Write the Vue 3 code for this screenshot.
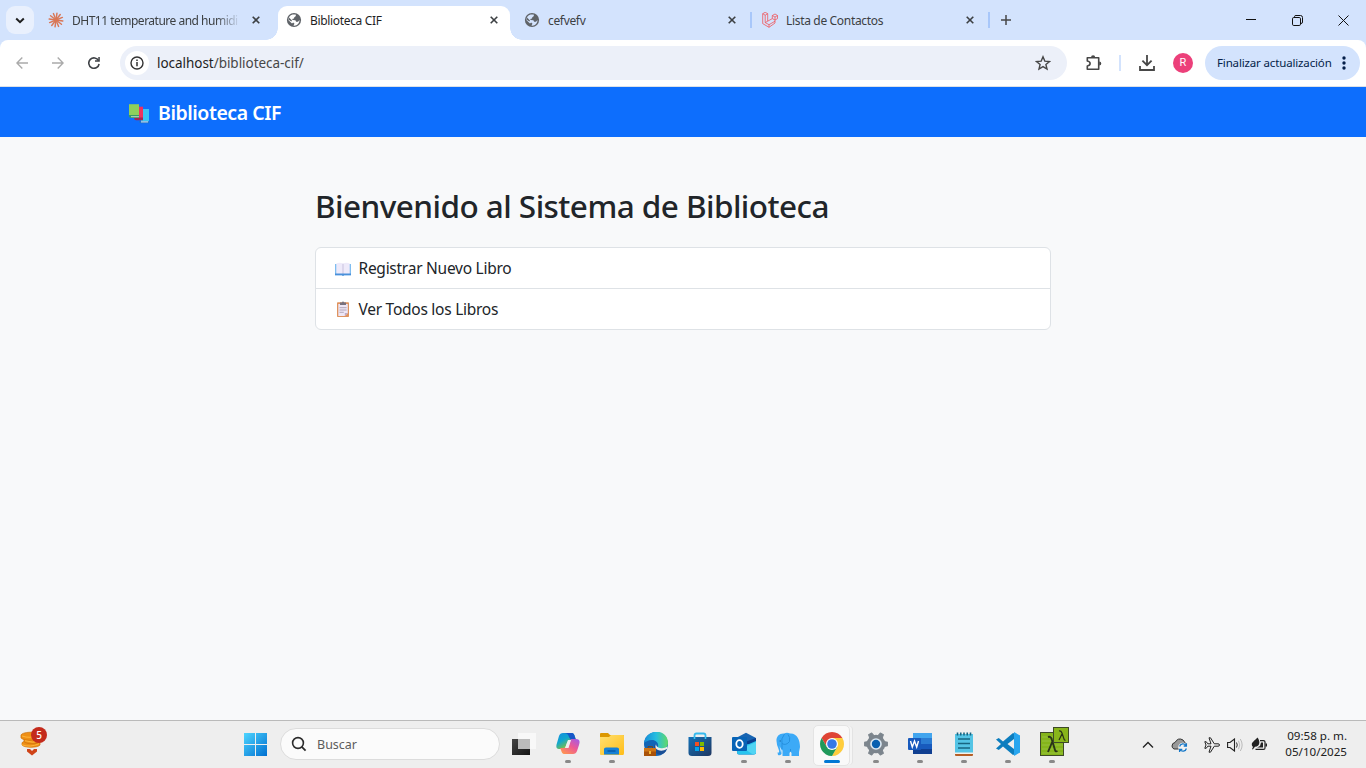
<script setup>
const tabs = [
  { title: 'DHT11 temperature and humidi', icon: 'spark', cls: 'first' },
  { title: 'Biblioteca CIF', icon: 'globe', cls: 'active' },
  { title: 'cefvefv', icon: 'globe', cls: 'sep' },
  { title: 'Lista de Contactos', icon: 'laravel', cls: 'sep' }
]
const rays = [0, 30, 60, 90, 120, 150, 180, 210, 240, 270, 300, 330]
const teeth = [30, 90, 150, 210, 270, 330]
</script>

<template>
  <div class="screen">
    <header class="tabstrip">
      <button class="tabsearch"><svg width="10" height="7" viewBox="0 0 10 7"><path d="M1.2 1.5 5 5.2 8.8 1.5" fill="none" stroke="#1f1f1f" stroke-width="2"/></svg></button>
      <div v-for="t in tabs" :key="t.title" class="tab" :class="t.cls">
        <svg v-if="t.icon === 'spark'" class="fav" viewBox="0 0 16 16"><g stroke="#d97757" stroke-width="1.45" stroke-linecap="round"><line v-for="r in rays" :key="r" x1="8" y1="8" x2="8" y2="1.1" :transform="`rotate(${r + 8} 8 8)`"/></g></svg>
        <svg v-else-if="t.icon === 'globe'" class="fav" viewBox="0 0 16 16"><circle cx="8" cy="8" r="7.1" fill="#5f6368"/><path d="M9.7 2.5 9.9 4.1 8.3 5.3 8 6.6 6.2 7 6.6 8.1 9.4 8.2 10.1 9.8 12 9.7 13.5 8.1C13.6 11.6 11 13.6 8.6 13.7L7.4 13.5 8.5 11.7 7.2 10.4 6 11.4 2.3 8C2.3 5.5 4 3.2 6.6 2.5Z" :fill="t.cls === 'active' ? '#fff' : '#d3e3fd'"/><path d="M2.4 7.4 5.4 9.6 6 8.5 3 5.6Z" fill="#5f6368"/></svg>
        <svg v-else class="fav" viewBox="0 0 16 16"><path d="M.7 1.7 3.2.3 5.7 1.7V9.2L10.3 6.6V3.5L13 2 15.5 3.5V6.6L13 8V11L7 15.3.7 11.6ZM.7 1.7 3.2 3.2 5.7 1.7M3.2 3.2V10.6L5.7 9.2M3.2 10.6 7 12.7 13 9.2M7 12.7V15.3M10.3 3.5 13 5 15.5 3.5M13 5V8L10.3 6.6" fill="none" stroke="#f0555a" stroke-width=".8"/></svg>
        <span class="title">{{ t.title }}</span>
        <svg class="close" viewBox="0 0 8 8"><path d="m.7.7 6.6 6.6M7.3.7.7 7.3" stroke="#3c4043" stroke-width="1.6"/></svg>
      </div>
      <svg class="plus" viewBox="0 0 10 10"><path d="M5 0V10M0 5H10" stroke="#474747" stroke-width="1.5"/></svg>
      <div class="wincontrols">
        <svg width="11" height="11" viewBox="0 0 11 11"><path d="M0 4.5H10" stroke="#111" stroke-width="1"/></svg>
        <svg width="11" height="11" viewBox="0 0 11 11"><path d="M2.5 2.5V1.5Q2.5.5 4 .5H8.5Q10.5.5 10.5 2.5V7Q10.5 8.5 9 8.5H8.5" fill="none" stroke="#111"/><rect x=".5" y="2.5" width="8" height="8" rx="1.3" fill="none" stroke="#111"/></svg>
        <svg width="11" height="11" viewBox="0 0 11 11"><path d="m.5.5 10 10M10.5.5l-10 10" stroke="#111" stroke-width="1"/></svg>
      </div>
    </header>

    <div class="toolbarwrap">
    <div class="toolbar">
      <svg class="nav" viewBox="0 0 12 12"><path d="M12 6H1M6.3.6.9 6l5.4 5.4" fill="none" stroke="#aaa" stroke-width="1.4"/></svg>
      <svg class="nav" viewBox="0 0 12 12"><path d="M0 6h11M5.7.6 11.1 6l-5.4 5.4" fill="none" stroke="#aaa" stroke-width="1.4"/></svg>
      <svg class="nav" viewBox="0 0 12 12"><path d="M10.6 3.7A5.2 5.2 0 1 0 11.1 7" fill="none" stroke="#3f4246" stroke-width="1.6"/><path d="M11.8 0V4.8H7V3.3H10.3V0Z" fill="#3f4246"/></svg>
      <div class="omnibox">
        <span class="info"><svg width="14" height="14" viewBox="0 0 14 14"><circle cx="7" cy="7" r="6" fill="none" stroke="#333" stroke-width="1.4"/><path d="M7 6.1V10.3M7 3.6V5" stroke="#333" stroke-width="1.5"/></svg></span>
        <span class="url">localhost<i>/biblioteca-cif/</i></span>
        <svg class="star" width="16" height="16" viewBox="0 0 16 16"><path d="m8 1.8 1.8 4.3 4.7.4-3.6 3 1.1 4.6L8 11.6l-4 2.5 1.1-4.6-3.6-3 4.7-.4Z" fill="none" stroke="#474747" stroke-width="1.4"/></svg>
      </div>
      <svg class="ext" width="18" height="18" viewBox="0 0 18 18"><path d="M2.3 3.7H13.7V15.3H2.3V12Q5.1 11.5 5.1 9.5T2.3 7Z" fill="none" stroke="#474747" stroke-width="1.6" stroke-linejoin="round"/><path d="M6 3.4A2.1 2.1 0 0 1 10.2 3.4ZM14.2 7.4A2.1 2.1 0 0 1 14.2 11.6Z" fill="#474747"/></svg>
      <span class="divider"></span>
      <svg class="download" width="18" height="18" viewBox="0 0 18 18"><path d="M9 1V11M4.4 6.6 9 11.2 13.6 6.6M2 12V16H16V12" fill="none" stroke="#474747" stroke-width="1.8"/></svg>
      <span class="avatar">R</span>
      <button class="update"><span>Finalizar actualización</span><svg width="4" height="14" viewBox="0 0 4 14"><g fill="#041e49"><circle cx="2" cy="2" r="1.7"/><circle cx="2" cy="7" r="1.7"/><circle cx="2" cy="12" r="1.7"/></g></svg></button>
    </div>
    </div>

    <nav class="navbar">
      <svg width="22" height="22" viewBox="0 0 22 22"><path d="M13 6H21V19H13Z" fill="#38c3f3"/><path d="M11 18.2h10v2H13Q11 20.2 11 18.2" fill="#2372c3"/><path d="M13 18.4h7v1h-7z" fill="#d7e6f3"/><path d="M8 3.7h7V16H8Z" fill="#ed315f"/><path d="M6 14.6h9v2.6H8Q6 17.2 6 14.6" fill="#a42652"/><path d="M1 1.2h10V13H1Z" fill="#8fd05b"/><path d="M.8 12H11v3H3Q.8 15 .8 12" fill="#339b68"/><path d="M3 13.2h8v1H3z" fill="#cad3c7"/></svg>
      <span>Biblioteca CIF</span>
    </nav>

    <main class="page">
      <h1><span>Bienvenido al Sistema de Biblioteca</span></h1>
      <ul>
        <li><svg width="18" height="18" viewBox="0 0 18 18"><path d="M1 5H17V16.3H10L9 17 8 16.3H1Z" fill="#7fbdf0"/><path d="M2.3 4.4Q6 2.8 9 4.8 12 2.8 15.7 4.4V15H2.3Z" fill="#eeeafa"/><path d="M8.3 4.8H9.7V15H8.3Z" fill="#d3cde5"/><path d="M1 14.5H17V16.3H10L9 17 8 16.3H1Z" fill="#4a90da"/></svg><span>Registrar Nuevo Libro</span></li>
        <li><svg width="18" height="18" viewBox="0 0 18 18"><rect x="3" y="2.2" width="12" height="14.8" rx=".8" fill="#df935f"/><path d="M4.3 4H13.8V13L10.8 16H4.3Z" fill="#eee6f5"/><path d="m10.8 16 3-3h-3z" fill="#bdaac8"/><path d="M6 3V2.4H8A1 1 0 0 1 10 2.4H12V5H6Z" fill="#77717f"/><path d="M5.5 7.7H12.6M5.5 10H12.6M5.5 12.3H9.8" stroke="#aaa0b5" stroke-width=".9"/></svg><span>Ver Todos los Libros</span></li>
      </ul>
    </main>

    <footer class="taskbar">
      <div class="widget">
        <svg width="24" height="32" viewBox="0 0 24 32"><g fill="#ee8f16" stroke="#cd7007" stroke-width=".7"><path d="M2 14c0-3 17-4 18-1v3c-2 3-16 3-18 0Z"/><path d="M4 9.5c1-3 15-3 16 0v3c-2 3-14 3-16 0Z"/><path d="M1 6c1-3 15-4 17-1v3.5C15 12 4 12 1 9Z"/></g><path d="M2 7q8 3 16-1M5 11.7q8 3 15 0M2 15.8q8 3 17-1" stroke="#ffb53a" fill="none"/><path d="M7 20h3l2 2 2-2h3v2.5L12 26.5 7 22.5Z" fill="#cf4318"/></svg>
        <b>5</b>
      </div>
      <svg class="start" width="23" height="23" viewBox="0 0 23 23"><defs><linearGradient id="win" x2="1" y2="1"><stop stop-color="#4ed5ff"/><stop offset="1" stop-color="#006fd0"/></linearGradient></defs><path d="M0 0H11V11H0ZM12 0H23V11H12ZM0 12H11V23H0ZM12 12H23V23H12Z" fill="url(#win)"/></svg>
      <div class="search"><svg width="16" height="16" viewBox="0 0 16 16"><circle cx="7" cy="7" r="5.4" fill="none" stroke="#2b2b2b" stroke-width="1.6"/><path d="m10.8 10.9 3.8 3.8" stroke="#2b2b2b" stroke-width="1.8"/></svg><span>Buscar</span></div>

      <div class="apps">
        <div><svg viewBox="0 0 24 24"><defs><linearGradient id="tv" x2="1" y2="1"><stop stop-color="#444"/><stop offset="1" stop-color="#151515"/></linearGradient></defs><path d="M0 7H18V23H0Z" fill="url(#tv)"/><path d="M6 1H24V17H6Z" fill="#f8f8f8"/><path d="M6 7H18V17H6Z" fill="#bababa"/></svg></div>
        <div class="open"><svg viewBox="0 0 24 24"><defs><linearGradient id="ca" x2=".7" y2="1"><stop stop-color="#168cdf"/><stop offset=".45" stop-color="#10a7cf"/><stop offset=".75" stop-color="#64ba64"/><stop offset="1" stop-color="#f5cf20"/></linearGradient><linearGradient id="cb" x1="1" x2=".2" y2="1"><stop stop-color="#9d5bed"/><stop offset=".5" stop-color="#ed5994"/><stop offset="1" stop-color="#ff9652"/></linearGradient></defs><path d="M7 1H16Q18 1 19 5L20 8H15Q12 8 11 11L9 17H3Q-1 17 1 11L3 4Q4 1 7 1Z" fill="url(#ca)"/><path d="M8 1H16Q18 1 19 5L20 8H16Q14 8 13 5 12 1 8 1" fill="#1757c8"/><path d="M15 7H20Q25 7 23 13L21 19Q20 22 17 22H8Q6 22 5 18L4 16H9Q12 16 13 13Z" fill="url(#cb)"/><path d="M12 8H15L12.5 16H9Z" fill="#eee"/></svg></div>
        <div class="open"><svg viewBox="0 0 24 24"><defs><linearGradient id="fo" x2="1" y2="1"><stop stop-color="#ffe071"/><stop offset="1" stop-color="#ffbd18"/></linearGradient></defs><path d="M0 2Q0 1 1 1H8L10 3H23Q24 3 24 4V12H0Z" fill="#dc9700"/><path d="M0 5H9L11 3H23Q24 3 24 4V21Q24 23 23 23H1Q0 23 0 22Z" fill="url(#fo)"/><path d="M4 22.5V17Q4 15.5 6 15.5H17Q19 15.5 19 17V22.5Z" fill="#1681d5"/><path d="M7.5 19h8" stroke="#075ba9" stroke-width="1.5"/></svg></div>
        <div><svg viewBox="0 0 24 24"><defs><linearGradient id="ed" x2="1"><stop stop-color="#168cd8"/><stop offset=".5" stop-color="#26bde0"/><stop offset="1" stop-color="#62da67"/></linearGradient></defs><circle cx="12" cy="12" r="12" fill="#1265b6"/><path d="M0 11C2-4 24-4 24 11c0 7-10 8-11 5 3-3 0-8-5-8C4 8 1 10 0 11Z" fill="url(#ed)"/><path d="M12 12Q12 20 23 17C20 25 10 24 10 16Q10 12 12 12" fill="#194e95"/><path d="M12 12q-2 4 2 6 4 2 9-1l.6-2.5Q20 17 16 16q-4-1-4-4Z" fill="#eee"/><path d="M0 16H12V24H0Z" fill="#a95209"/><path d="M0 16H12V19.5H0Z" fill="#cf7415"/><path d="M5 19h2v3H5z" fill="#f0b638"/><path d="M4 16V14.7H8.5V16" fill="none" stroke="#784114"/></svg></div>
        <div><svg viewBox="0 0 24 24"><defs><linearGradient id="st" x2="1" y2="1"><stop stop-color="#1370b7"/><stop offset="1" stop-color="#203760"/></linearGradient></defs><path d="M6.5 8V3.5Q6.5 1.5 8.5 1.5H15.5Q17.5 1.5 17.5 3.5V8" fill="none" stroke="#35b9ed" stroke-width="1.8"/><path d="M.5 5H23.5V21Q23.5 24 20 24H4Q.5 24 .5 21Z" fill="url(#st)"/><path d="M6.5 5V7M17.5 5V7" stroke="#35c8f1" stroke-width="1.6"/><path d="M7 10h4v4H7z" fill="#f25022"/><path d="M12 10h4v4h-4z" fill="#7fba00"/><path d="M7 15h4v4H7z" fill="#00a4ef"/><path d="M12 15h4v4h-4z" fill="#ffb900"/></svg></div>
        <div class="open"><svg viewBox="0 0 24 24"><path d="M4 6 14 .8 24 6V20Q24 22.5 21.5 22.5H7Q5 22.5 5 20Z" fill="#1764b2"/><path d="M13 10 24 6V13L14 18Z" fill="#093f91"/><path d="M7 14 17 12 24 9V20Q24 22.5 21.5 22.5H7Q5 22.5 5 20Z" fill="#28c4ef"/><path d="M11 16 24 10V20Q24 22 21 22.5Z" fill="#51d4f3"/><rect y="5" width="15" height="14" rx="1" fill="#0763b6"/><ellipse cx="7.5" cy="12" rx="3.2" ry="3.8" fill="none" stroke="#fff" stroke-width="1.8"/></svg></div>
        <div class="open"><svg viewBox="0 0 24 24"><path d="M.5 9C0 4 4 1 8 1.5Q11 0 14 1.5C21 1 24 8 24 15L23 20V24H15.5V21L14.5 19.5 13.5 21V24H6.5V18.5L5.5 17.5 5.5 22Q4 24 2 23L1.5 20.5H3Q3.5 19 2.2 16Q.7 13 .5 9Z" fill="#3caaf7"/><path d="M8.5 2Q4.5 7 6 11.5 10 14 13.5 9.5 14.5 5 12 2.5M6 11.5V17M14.5 19.5V17" fill="none" stroke="#248ddb" stroke-width=".9"/><circle cx="4.2" cy="9" r=".7" fill="#196caf"/><path d="m3.5 14 2 4-.4 3Z" fill="#e8f4fc"/></svg></div>
        <div class="open current"><svg viewBox="0 0 24 24"><circle cx="12" cy="12" r="12" fill="#eee"/><path d="M1.61 6A12 12 0 0 1 22.39 6H12L6.8 15Z" fill="#df4435"/><path d="M22.39 6A12 12 0 0 1 12 24L17.2 15 12 6Z" fill="#ffcd3c"/><path d="M1.61 6A12 12 0 0 0 12 24L17.2 15H6.8Z" fill="#20995b"/><circle cx="12" cy="12" r="6" fill="#fff"/><circle cx="12" cy="12" r="4.8" fill="#3678e5"/></svg></div>
        <div class="open"><svg viewBox="0 0 24 24"><circle cx="12" cy="12" r="9.3" fill="#7c858d"/><path v-for="a in teeth" :key="a" d="M9.6 4 10.2.3H13.8L14.4 4Z" :transform="`rotate(${a} 12 12)`" fill="#7c858d" stroke="#7c858d" stroke-width="1" stroke-linejoin="round"/><circle cx="12" cy="12" r="5.8" fill="#dce8f2"/><circle cx="12" cy="12" r="4.2" fill="#075fb0"/></svg></div>
        <div class="open"><svg viewBox="0 0 24 24"><path d="M5 1H24V7H5Z" fill="#42a5ee"/><path d="M5 6H24V12H5Z" fill="#2b7cd3"/><path d="M5 12H24V18H5Z" fill="#185abd"/><path d="M5 17H24V22H5Z" fill="#103f91"/><rect y="6" width="13" height="12" rx="1" fill="#185abd"/><path d="m2.5 9 1.8 6L6.5 9l2.2 6 1.8-6" fill="none" stroke="#fff" stroke-width="1.4"/></svg></div>
        <div class="open"><svg viewBox="0 0 24 24"><path d="M3 2H21V21H3Z" fill="#54c4e5"/><path d="M3 21H21V23Q21 24 20 24H4Q3 24 3 23Z" fill="#b65e25"/><path d="M3 20.5H21V22H3Z" fill="#f1f2ed"/><path d="M5.5.5v3m3.25-3v3M12 .5v3m3.25-3v3M18.5.5v3M6 7h12M6 11.5h12M6 16h12" stroke="#176581" stroke-width="1.6"/></svg></div>
        <div class="open"><svg viewBox="0 0 24 24"><path d="M17 1 24 4V20L17 23 7 14.5 2.8 18 0 16.5 5 12 0 7.5 2.8 6 7 9.5ZM18 7 11.5 12 18 17Z" fill="#0c7dbe" fill-rule="evenodd"/><path d="M18 0 24 3.5V20.5L18 24Z" fill="#28a6ef"/></svg></div>
        <div class="open npp"><svg viewBox="0 0 30 30"><rect x=".5" y="5.5" width="23" height="23" fill="#85b51b" stroke="#3e4a28"/><path d="M2 10h21M2 14h21M2 18h21M2 22h21M2 26h21" stroke="#a2c64d" stroke-width=".7"/><path d="M8 10q3-1 4 3l3 10q.5 2 2.5 1M12.2 15 8 25" fill="none" stroke="#293417" stroke-width="1.9"/><rect x="13.5" y=".5" width="15" height="15" fill="#88b51a" stroke="#3e4a28"/><path d="M19 4q2-.5 3 2l2 6q.5 1.5 1.5 1M22 7 19 13" fill="none" stroke="#293417" stroke-width="1.2"/></svg></div>
      </div>

      <div class="tray">
        <svg class="chev" width="12" height="8" viewBox="0 0 12 8"><path d="m1 6.5 5-5 5 5" fill="none" stroke="#222" stroke-width="1.3"/></svg>
        <svg class="cloud" width="18" height="16" viewBox="0 0 18 16"><path d="M1 9Q1 6 4 5.5 7 0 12 3L15 7 8 12H3Q1 11 1 9Z" fill="#999" stroke="#333"/><circle cx="12" cy="10.5" r="4.8" fill="#f2f2f2"/><path d="M8.6 9.5A3.6 3.6 0 0 1 15 8.4M15.4 6.3V9H12.7M15.4 11.5A3.6 3.6 0 0 1 9 12.7M8.6 15v-2.7h2.7" fill="none" stroke="#1778c8" stroke-width="1.3"/></svg>
        <svg class="plane" width="16" height="16" viewBox="0 0 16 16"><path d="M15.5 8Q15.5 6.8 14 6.8H10.3L6.5.8H5L7 6.8H3.8L2.2 4.7H.8L2 8 .8 11.3h1.4l1.6-2.1H7L5 15.2h1.5l3.8-6H14Q15.5 9.2 15.5 8Z" fill="none" stroke="#222"/></svg>
        <svg class="vol" width="17" height="14" viewBox="0 0 17 14"><path d="M.6 4.5H3L7.5 1V13L3 9.5H.6Z" fill="none" stroke="#222" stroke-width="1.1"/><path d="M9.5 4.5Q11 7 9.5 9.5" fill="none" stroke="#333"/><path d="M11.5 2.8Q14 7 11.5 11.2M13.3 1Q17 7 13.3 13" fill="none" stroke="#bbb"/></svg>
        <svg class="bat" width="17" height="15" viewBox="0 0 17 15"><path d="M9 3.6H12.5Q14 3.6 14 5.1V10.9Q14 12.4 12.5 12.4H4.5" fill="none" stroke="#222" stroke-width="1.2"/><path d="M10 5.6H12V10.6H6L9 9ZM14.5 6.5H16V9.5H14.5Z" fill="#222"/><path d="M1.2 9C-.5 5.5 3.5 4 6.5.5 9.8 5 8.5 9.5 4 9.8L1.8 12.5 1 12 2 10Z" fill="#222"/></svg>
        <div class="clock"><span>09:58 p. m.</span><span>05/10/2025</span></div>
      </div>
    </footer>
  </div>
</template>

<style>
body { margin: 0; overflow: hidden; }
</style>

<style scoped>
* { box-sizing: border-box; }
svg { display: block; flex: none; }
span, b { white-space: nowrap; }
button { border: 0; padding: 0; font: inherit; }
.screen { width: 1366px; height: 768px; display: flex; flex-direction: column; background: #f8f9fa; font-family: "Noto Sans", "Open Sans", sans-serif; color: #212529; }
.tabstrip { height: 40px; flex: none; background: #d3e3fd; display: flex; position: relative; }
.tabsearch { width: 28px; height: 28px; margin: 6px 0 0 6px; border-radius: 9px; background: #e9f0fd; display: grid; place-items: center; }
.tab { width: 238px; height: 40px; display: flex; align-items: center; padding-left: 14px; position: relative; font-size: 12px; letter-spacing: -.33px; color: #3c4043; }
.fav { width: 16px; height: 16px; position: relative; }
.title { width: 167px; margin-left: 8px; line-height: 20px; padding-top: 1px; position: relative; }
.first .title { letter-spacing: -.5px; mask-image: linear-gradient(90deg, #000 86%, transparent 101%); }
.close { width: 8px; height: 8px; margin-left: 13px; position: relative; }
.active { color: #1f1f1f; z-index: 1; }
.active .title, .active .close, .active .fav { z-index: 1; }
.active::before { content: ""; position: absolute; left: 6px; right: 0; top: 6px; bottom: 0; background: #fff; border-radius: 9px 9px 0 0; }
.active::after { content: ""; position: absolute; left: -6px; right: -12px; bottom: 0; height: 12px; background: radial-gradient(circle at 0 0, transparent 11.5px, #fff 12px) 0 0 / 12px 12px no-repeat, radial-gradient(circle at 100% 0, transparent 11.5px, #fff 12px) 100% 0 / 12px 12px no-repeat; }
.sep::after { content: ""; position: absolute; right: -4px; top: 12px; width: 2px; height: 16px; background: #a8c7fa; }
.plus { width: 10px; height: 10px; margin: 15px 0 0 15px; }
.wincontrols { margin: 15px 17px 0 auto; display: flex; gap: 35px; }
.toolbarwrap { background: #d3e3fd; flex: none; }
.toolbar { height: 47px; background: #fff; border-bottom: 1px solid #dce1e8; border-radius: 8px 8px 0 0; display: flex; align-items: center; padding-left: 16px; }
.nav { width: 12px; height: 12px; margin-right: 24px; }
.nav:nth-child(3) { margin-right: 20px; }
.omnibox { width: 947px; height: 34px; border-radius: 17px; background: #ecf0f9; display: flex; align-items: center; padding-left: 5px; }
.info { width: 24px; height: 24px; border-radius: 50%; background: #fff; display: grid; place-items: center; }
.url { margin-left: 8px; font-size: 13.5px; letter-spacing: -.04px; color: #1f1f1f; }
.url i { font-style: normal; color: #474747; }
.star { margin: 0 16px 0 auto; }
.ext { margin-left: 18px; }
.divider { width: 2px; height: 16px; margin-left: 16px; background: #d3e3fd; }
.download { margin-left: 17px; }
.avatar { width: 20px; height: 20px; margin-left: 17px; border-radius: 50%; background: #ec407a; color: #fff; font: 11px/20px Roboto, sans-serif; text-align: center; }
.update { width: 155px; height: 34px; margin-left: 12px; border-radius: 17px; background: #d3e3fd; color: #041e49; display: flex; align-items: center; padding-left: 12px; font-size: 11.5px; letter-spacing: -.15px; }
.update span { width: 125px; text-align: left; margin-top: -1px; }
.navbar { height: 50px; flex: none; background: #0d6efd; display: flex; align-items: center; padding: 3px 0 0 128px; color: #fff; font-size: 19.5px; font-weight: 600; letter-spacing: -.45px; }
.navbar span { margin: -3px 0 0 8px; }
.page { flex: 1; width: 736px; margin: 0 auto; padding-top: 48px; }
h1 { margin: 0; font-size: 31.5px; line-height: 42px; font-weight: 540; letter-spacing: -.55px; }
ul { list-style: none; margin: 20px 0 0; padding: 0; border: 1px solid #dee2e6; border-radius: 6px; background: #fff; height: 83px; }
li { height: 40px; display: flex; align-items: center; padding-left: 18px; font-size: 15.5px; letter-spacing: -.26px; }
li + li { height: 41px; border-top: 1px solid #dee2e6; }
li span { margin-left: 6.5px; }
.taskbar { height: 48px; flex: none; background: #eee; border-top: 1px solid #bababa; display: flex; position: relative; }
.widget { width: 30px; height: 34px; margin: 3px 0 0 20px; position: relative; }
.widget svg { margin-top: 5px; }
.widget b { position: absolute; left: 11px; top: 3px; width: 16px; height: 16px; border-radius: 50%; background: #c42b1c; color: #fff; font-size: 10px; line-height: 16px; text-align: center; font-weight: 500; }
.start { margin: 12px 0 0 194px; }
.search { width: 220px; height: 32px; margin: 7px 0 0 13px; border: 1px solid #dcdcdc; border-radius: 16px; background: #fbfbfb; display: flex; align-items: center; padding-left: 10px; font-size: 12.5px; color: #5c5c5c; }
.search span { margin-left: 10px; }
.apps { display: flex; margin-left: 2px; }
.apps > div { width: 44px; height: 47px; padding: 11px 0 0 10px; position: relative; }
.apps svg { width: 24px; height: 24px; position: relative; }
.open::after { content: ""; position: absolute; left: 19px; top: 39px; width: 6px; height: 3px; border-radius: 2px; background: #898989; }
.current::before { content: ""; position: absolute; left: 3px; top: 4px; width: 35px; height: 39px; border: 1px solid #e4e4e4; border-radius: 5px; background: #f9f9f9; box-shadow: 3px 0 0 -1px #f5f5f5, 4px 0 0 -1px #e3e3e3; }
.current::after { left: 14px; width: 16px; background: #0078d4; }
.apps .npp { padding: 6px 0 0 10px; }
.npp svg { width: 30px; height: 30px; }
.tray { margin-left: auto; margin-right: 19px; display: flex; align-items: center; }
.cloud { margin-left: 17px; }
.plane { margin-left: 15px; }
.vol { margin-left: 7px; }
.bat { margin-left: 7px; }
.clock { width: 79px; display: flex; flex-direction: column; align-items: flex-end; margin-top: -2px; font-size: 11.6px; line-height: 16px; letter-spacing: 0; color: #202020; }
</style>
